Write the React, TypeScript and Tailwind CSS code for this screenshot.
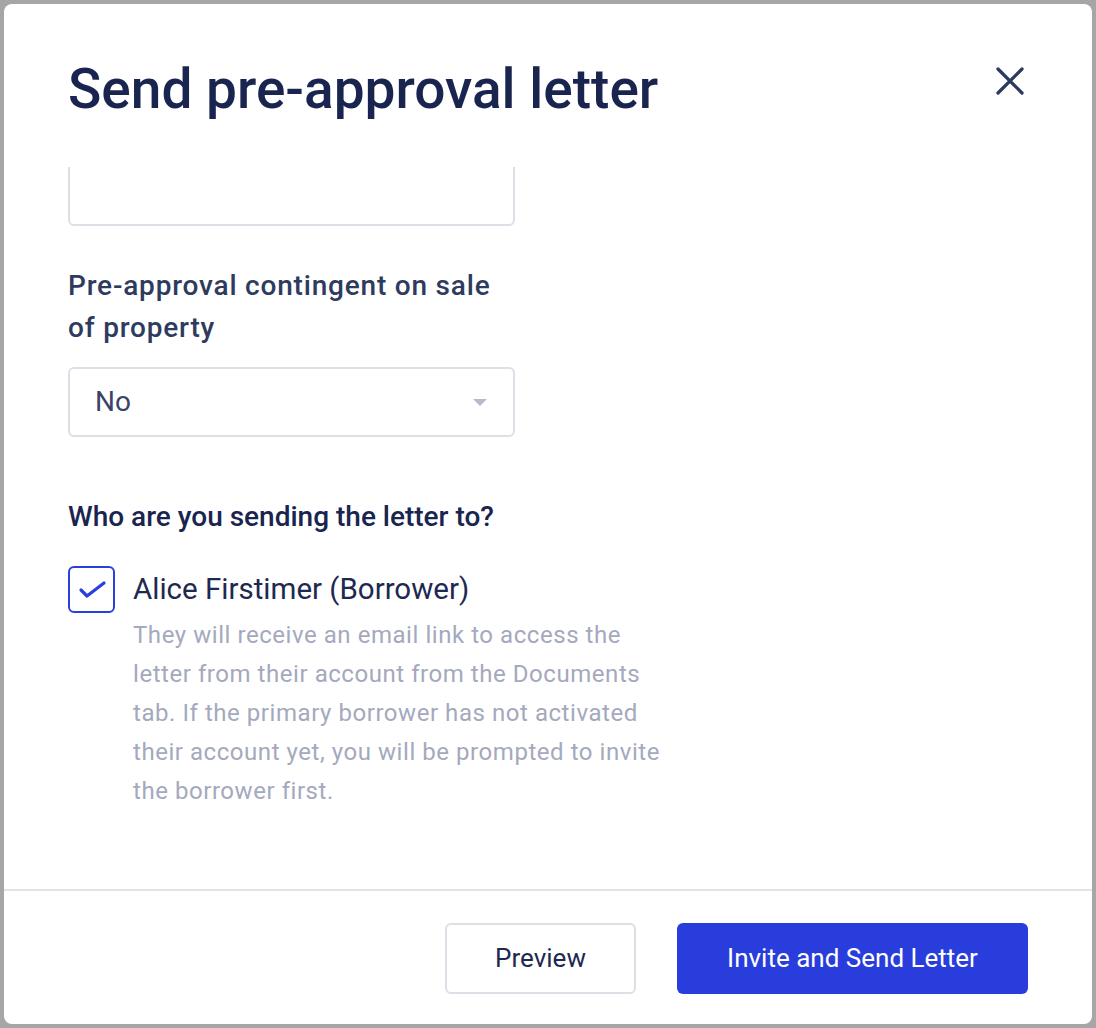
import React, { useState } from 'react';

const CloseIcon = () => (
  <svg width="28" height="28" viewBox="0 0 28 28" fill="none" className="mr-1 mt-[10px] shrink-0">
    <path d="M2 2L26 26M26 2L2 26" stroke="#2c3a60" strokeWidth="3.3" strokeLinecap="round" />
  </svg>
);

const App: React.FC = () => {
  const [checked, setChecked] = useState(true);

  return (
    <div className="h-screen w-full bg-[#a6a6a6] p-1 font-['Roboto',sans-serif]">
      <div className="flex h-full flex-col overflow-hidden rounded-lg bg-white">
        {/* Header */}
        <div className="flex items-start justify-between pl-16 pr-16 pt-[53px] pb-[46px]">
          <h1 className="text-[55px] leading-[64px] font-medium text-[#19254f]">
            Send pre-approval letter
          </h1>
          <button type="button" aria-label="Close">
            <CloseIcon />
          </button>
        </div>

        {/* Scrolled body */}
        <div className="flex-1 overflow-hidden px-16">
          <div className="-mt-[11px] w-[447px]">
            <div className="h-[70px] rounded-md border-2 border-[#dcdfe5] bg-white" />
          </div>

          <label className="mt-[39px] block w-[447px] text-[28px] leading-[42px] font-medium tracking-[0.8px] text-[#2f3b5e]">
            Pre-approval contingent on sale of property
          </label>
          <div className="mt-[18px] flex h-[70px] w-[447px] items-center justify-between rounded-md border-2 border-[#dcdfe5] pl-[25px] pr-[26px]">
            <span className="text-[28px] text-[#3a4468]">No</span>
            <svg width="14" height="7" viewBox="0 0 14 7">
              <path d="M0 0H14L7 7Z" fill="#b6bbc9" />
            </svg>
          </div>

          <h2 className="mt-[59px] text-[28px] leading-[42px] font-medium text-[#19254f]">
            Who are you sending the letter to?
          </h2>

          <div className="mt-[28px] flex items-start gap-[18px]">
            <button
              type="button"
              onClick={() => setChecked(!checked)}
              className="flex h-[47px] w-[47px] shrink-0 items-center justify-center rounded-md border-2 border-[#2b3fdb] bg-white"
            >
              {checked && (
                <svg width="43" height="43" viewBox="0 0 43 43" fill="none">
                  <path d="M11 22L17 28L34 15" stroke="#2b3fdb" strokeWidth="3.2" strokeLinecap="round" strokeLinejoin="round" />
                </svg>
              )}
            </button>
            <div>
              <div className="text-[29.5px] leading-[46px] text-[#1e2850]">Alice Firstimer (Borrower)</div>
              <p className="mt-[4px] w-[545px] text-[24px] leading-[39px] tracking-[0.55px] text-[#a4a9bd]">
                They will receive an email link to access the letter from their account from the Documents tab. If the primary borrower has not activated their account yet, you will be prompted to invite the borrower first.
              </p>
            </div>
          </div>
        </div>

        {/* Footer */}
        <div className="flex items-center justify-end gap-[41px] border-t-2 border-[#dfe2e7] px-16 pt-8 pb-[30px]">
          <button
            type="button"
            className="h-[71px] w-[191px] rounded-md border-2 border-[#dcdfe5] bg-white text-[26px] text-[#1e2850]"
          >
            Preview
          </button>
          <button
            type="button"
            className="h-[71px] w-[351px] rounded-md bg-[#283ddb] text-[26px] text-white"
          >
            Invite and Send Letter
          </button>
        </div>
      </div>
    </div>
  );
};

export default App;
